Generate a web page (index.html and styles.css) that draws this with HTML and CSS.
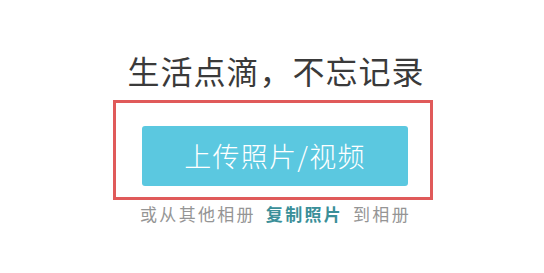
FILE: index.html
```html
<!DOCTYPE html>
<html lang="zh-CN">
<head>
<meta charset="utf-8">
<title>上传照片</title>
<link rel="stylesheet" href="styles.css">
</head>
<body>
<main class="page">
  <h1 class="title">生活点滴，不忘记录</h1>
  <div class="highlight">
    <button class="upload" type="button">上传照片/视频</button>
  </div>
  <p class="hint"><span>或从其他相册</span><a class="copy" href="#">复制照片</a><span>到相册</span></p>
</main>
</body>
</html>
```

FILE: styles.css
```css
html, body {
  margin: 0;
  padding: 0;
  background: #ffffff;
}

body {
  font-family: "Noto Sans CJK SC", "Noto Sans", sans-serif;
  width: 544px;
  height: 273px;
  overflow: hidden;
}

.page {
  display: flex;
  flex-direction: column;
  align-items: center;
  padding-top: 54px;
}

.title {
  margin: 0 0 0 8px;
  font-size: 32px;
  line-height: 32px;
  font-weight: 400;
  letter-spacing: 1px;
  color: #3a3a3a;
}

.highlight {
  box-sizing: border-box;
  width: 320px;
  height: 100px;
  margin-top: 14px;
  margin-left: 2px;
  border: 3px solid #e05a5a;
  padding: 23px 22px 0 26px;
}

.upload {
  display: flex;
  align-items: center;
  justify-content: center;
  width: 266px;
  height: 60px;
  border: none;
  border-radius: 3px;
  background: #5bc8e0;
  color: #ffffff;
  font-family: inherit;
  font-size: 27px;
  font-weight: 300;
  letter-spacing: 1.3px;
  padding: 0 0 2px 0;
}

.hint {
  display: flex;
  gap: 10px;
  margin: 5px 0 0 7px;
  font-size: 17px;
  line-height: 17px;
  letter-spacing: 2.3px;
  color: #959595;
}

.copy {
  color: #3a8f99;
  font-weight: 700;
  text-decoration: none;
}
```
